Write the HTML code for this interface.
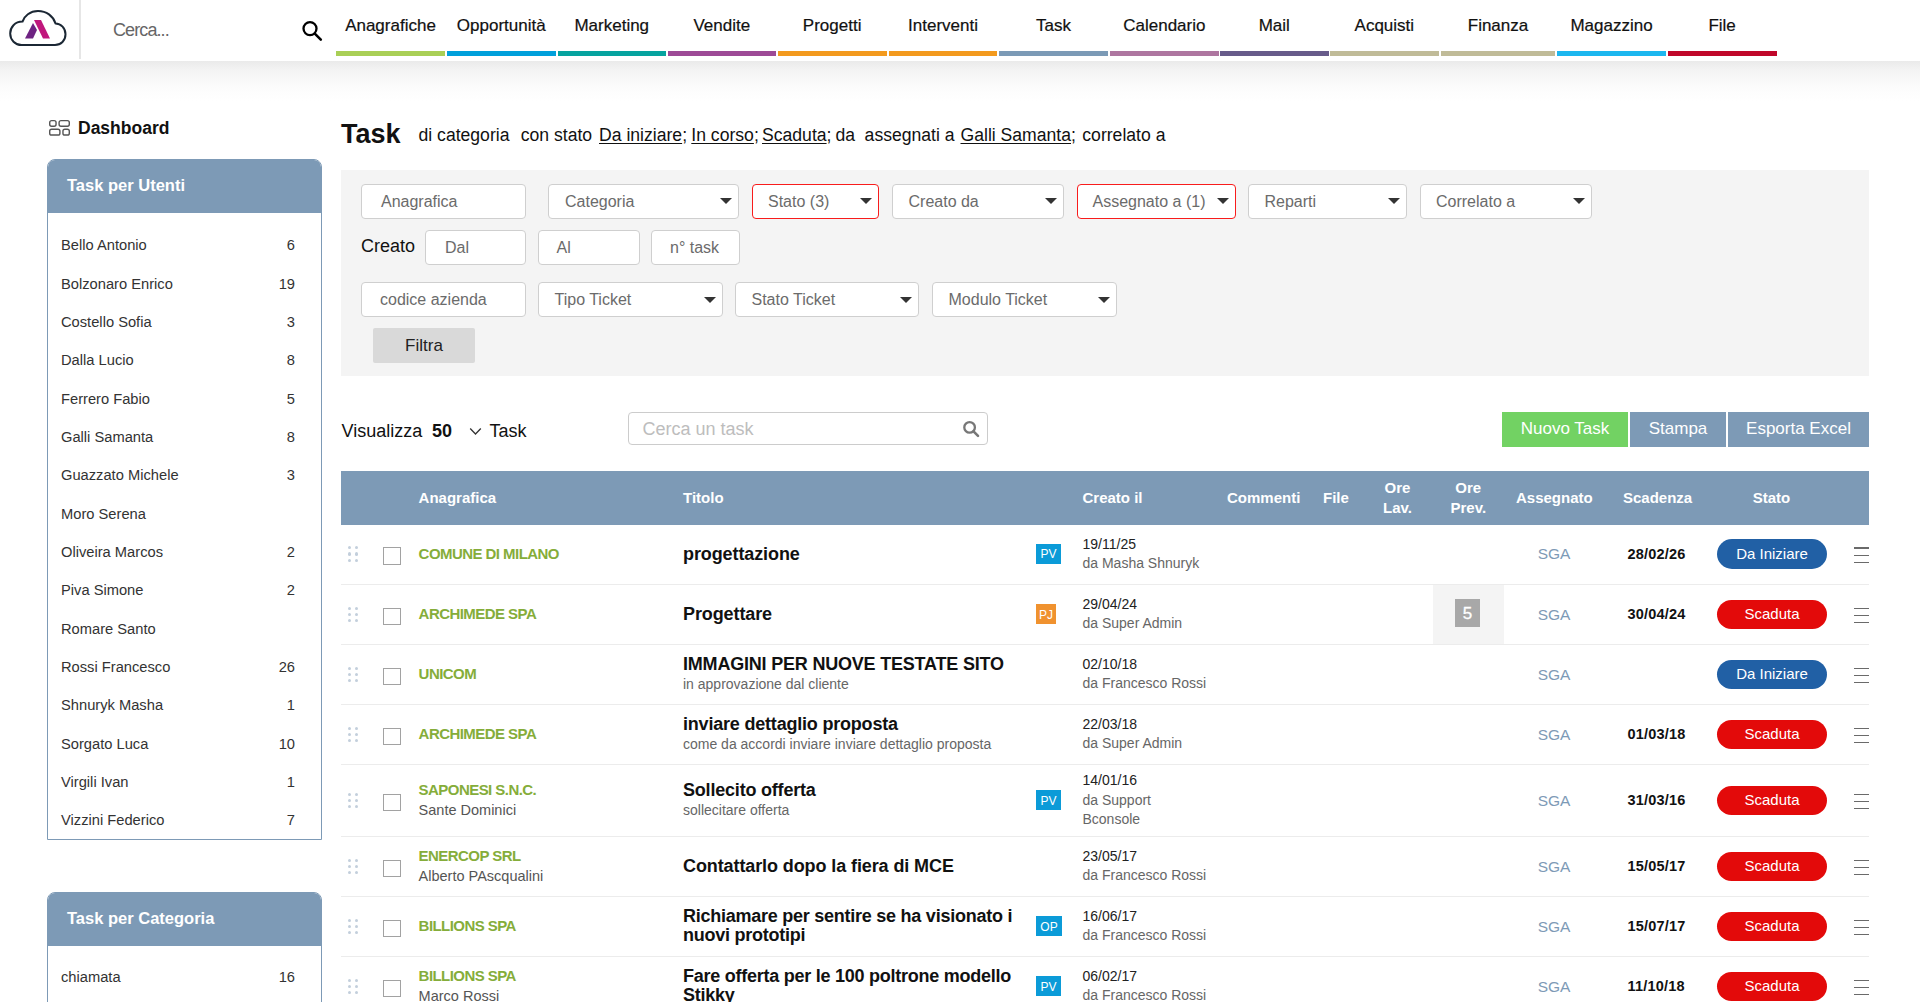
<!DOCTYPE html>
<html><head><meta charset="utf-8">
<style>
*{box-sizing:border-box;margin:0;padding:0}
html,body{width:1920px;height:1002px;overflow:hidden;background:#fff;font-family:"Liberation Sans",sans-serif;color:#222}
.a{position:absolute;white-space:nowrap}
#hdr{position:absolute;left:0;top:0;width:1920px;height:61px;background:#fff;z-index:2}
#shadow{position:absolute;left:0;top:61px;width:1920px;height:40px;background:linear-gradient(#eaeaea,#f3f3f3 22%,#f9f9f9 50%,#fdfdfd 75%,#fff);z-index:1}
.nav{position:absolute;top:0;height:61px}
.nav span{position:absolute;left:-20px;right:-20px;top:16px;text-align:center;font-size:17px;line-height:20px;color:#111;-webkit-text-stroke:0.2px #111}
.nav i{position:absolute;left:0;right:0;top:51px;height:4.6px}
</style></head><body>
<div id="hdr">
<svg class="a" style="left:0;top:0" width="80" height="61" viewBox="0 0 80 61">
<path d="M21.5,45 H55 C61,45 65.5,40.5 65.5,34.3 C65.5,28.3 61,23.6 55.5,23.4 C53,16 46.5,11 38,11 C30,11 24.2,16 22.5,21.6 C14.8,21.6 10.2,27.3 10.2,33.5 C10.2,40 15.3,45 21.5,45 Z" fill="none" stroke="#1b2734" stroke-width="2"/>
<path d="M34,20 L41,20 L50,38.5 L43,38.5 Z" fill="#c0177c"/>
<path d="M33,23 L37,30 L33,38.5 L25,38.5 Z" fill="#6e2382"/>
</svg>
<div class="a" style="left:79px;top:0;width:2px;height:59px;background:#e6e6e6"></div>
<div class="a" style="left:113px;top:19px;font-size:18px;line-height:22px;color:#666;letter-spacing:-0.9px">Cerca...</div>
<svg class="a" style="left:300px;top:19px" width="24" height="24" viewBox="0 0 24 24"><circle cx="10" cy="9.6" r="6.5" fill="none" stroke="#000" stroke-width="2.3"/><path d="M14.8,14.6 L20.8,20.6" stroke="#000" stroke-width="2.6" stroke-linecap="round"/></svg>
<div class="nav" style="left:336px;width:109.0px"><span>Anagrafiche</span><i style="background:#a9cf56"></i></div>
<div class="nav" style="left:447px;width:108.5px"><span>Opportunità</span><i style="background:#00a0db"></i></div>
<div class="nav" style="left:557.5px;width:108.5px"><span>Marketing</span><i style="background:#06a39f"></i></div>
<div class="nav" style="left:667.6px;width:108.4px"><span>Vendite</span><i style="background:#9d4a96"></i></div>
<div class="nav" style="left:777.7px;width:108.9px"><span>Progetti</span><i style="background:#f39a1e"></i></div>
<div class="nav" style="left:888.6px;width:108.9px"><span>Interventi</span><i style="background:#f39a1e"></i></div>
<div class="nav" style="left:999px;width:109.0px"><span>Task</span><i style="background:#7b9ab6"></i></div>
<div class="nav" style="left:1110px;width:108.7px"><span>Calendario</span><i style="background:#ae76a0"></i></div>
<div class="nav" style="left:1220px;width:108.5px"><span>Mail</span><i style="background:#675b8a"></i></div>
<div class="nav" style="left:1330px;width:108.7px"><span>Acquisti</span><i style="background:#c0bb98"></i></div>
<div class="nav" style="left:1441px;width:114.0px"><span>Finanza</span><i style="background:#c0bb98"></i></div>
<div class="nav" style="left:1557px;width:109.0px"><span>Magazzino</span><i style="background:#1cb7ef"></i></div>
<div class="nav" style="left:1667.7px;width:108.9px"><span>File</span><i style="background:#c0072a"></i></div>
</div>
<div id="shadow"></div>
<svg class="a" style="left:45px;top:115px" width="30" height="25" viewBox="0 0 30 25" fill="none" stroke="#555" stroke-width="1.4"><rect x="4.7" y="5.6" width="6.35" height="5.6" rx="1.9"/><rect x="14.1" y="5.6" width="10.2" height="5.6" rx="1.9"/><rect x="4.7" y="14.2" width="10.2" height="5.85" rx="1.9"/><rect x="17.95" y="14.2" width="6.35" height="5.85" rx="1.9"/></svg>
<div class="a" style="left:78px;top:117px;font-size:17.5px;line-height:22px;font-weight:bold;color:#111">Dashboard</div>
<div class="a" style="left:47px;top:159px;width:275px;height:681px;border:1.5px solid #7d9ab6;border-radius:8px 8px 0 0;overflow:hidden">
<div class="a" style="left:0;top:0;width:100%;height:53px;background:#7d9ab6"></div>
<div class="a" style="left:19px;top:15px;font-size:16.5px;line-height:20px;font-weight:bold;color:#fff">Task per Utenti</div>
<div class="a" style="left:13px;top:77.3px;font-size:14.7px;line-height:16px;color:#333">Bello Antonio</div>
<div class="a" style="right:26px;top:77.3px;font-size:14.7px;line-height:16px;color:#333">6</div>
<div class="a" style="left:13px;top:115.6px;font-size:14.7px;line-height:16px;color:#333">Bolzonaro Enrico</div>
<div class="a" style="right:26px;top:115.6px;font-size:14.7px;line-height:16px;color:#333">19</div>
<div class="a" style="left:13px;top:154.0px;font-size:14.7px;line-height:16px;color:#333">Costello Sofia</div>
<div class="a" style="right:26px;top:154.0px;font-size:14.7px;line-height:16px;color:#333">3</div>
<div class="a" style="left:13px;top:192.3px;font-size:14.7px;line-height:16px;color:#333">Dalla Lucio</div>
<div class="a" style="right:26px;top:192.3px;font-size:14.7px;line-height:16px;color:#333">8</div>
<div class="a" style="left:13px;top:230.6px;font-size:14.7px;line-height:16px;color:#333">Ferrero Fabio</div>
<div class="a" style="right:26px;top:230.6px;font-size:14.7px;line-height:16px;color:#333">5</div>
<div class="a" style="left:13px;top:268.9px;font-size:14.7px;line-height:16px;color:#333">Galli Samanta</div>
<div class="a" style="right:26px;top:268.9px;font-size:14.7px;line-height:16px;color:#333">8</div>
<div class="a" style="left:13px;top:307.3px;font-size:14.7px;line-height:16px;color:#333">Guazzato Michele</div>
<div class="a" style="right:26px;top:307.3px;font-size:14.7px;line-height:16px;color:#333">3</div>
<div class="a" style="left:13px;top:345.6px;font-size:14.7px;line-height:16px;color:#333">Moro Serena</div>
<div class="a" style="right:26px;top:345.6px;font-size:14.7px;line-height:16px;color:#333"></div>
<div class="a" style="left:13px;top:383.9px;font-size:14.7px;line-height:16px;color:#333">Oliveira Marcos</div>
<div class="a" style="right:26px;top:383.9px;font-size:14.7px;line-height:16px;color:#333">2</div>
<div class="a" style="left:13px;top:422.3px;font-size:14.7px;line-height:16px;color:#333">Piva Simone</div>
<div class="a" style="right:26px;top:422.3px;font-size:14.7px;line-height:16px;color:#333">2</div>
<div class="a" style="left:13px;top:460.6px;font-size:14.7px;line-height:16px;color:#333">Romare Santo</div>
<div class="a" style="right:26px;top:460.6px;font-size:14.7px;line-height:16px;color:#333"></div>
<div class="a" style="left:13px;top:498.9px;font-size:14.7px;line-height:16px;color:#333">Rossi Francesco</div>
<div class="a" style="right:26px;top:498.9px;font-size:14.7px;line-height:16px;color:#333">26</div>
<div class="a" style="left:13px;top:537.3px;font-size:14.7px;line-height:16px;color:#333">Shnuryk Masha</div>
<div class="a" style="right:26px;top:537.3px;font-size:14.7px;line-height:16px;color:#333">1</div>
<div class="a" style="left:13px;top:575.6px;font-size:14.7px;line-height:16px;color:#333">Sorgato Luca</div>
<div class="a" style="right:26px;top:575.6px;font-size:14.7px;line-height:16px;color:#333">10</div>
<div class="a" style="left:13px;top:613.9px;font-size:14.7px;line-height:16px;color:#333">Virgili Ivan</div>
<div class="a" style="right:26px;top:613.9px;font-size:14.7px;line-height:16px;color:#333">1</div>
<div class="a" style="left:13px;top:652.2px;font-size:14.7px;line-height:16px;color:#333">Vizzini Federico</div>
<div class="a" style="right:26px;top:652.2px;font-size:14.7px;line-height:16px;color:#333">7</div>
</div>
<div class="a" style="left:47px;top:891.5px;width:275px;height:118.5px;border:1.5px solid #7d9ab6;border-radius:8px 8px 0 0;overflow:hidden">
<div class="a" style="left:0;top:0;width:100%;height:53px;background:#7d9ab6"></div>
<div class="a" style="left:19px;top:15px;font-size:16.5px;line-height:20px;font-weight:bold;color:#fff">Task per Categoria</div>
<div class="a" style="left:13px;top:76.7px;font-size:14.7px;line-height:16px;color:#333">chiamata</div>
<div class="a" style="right:26px;top:76.7px;font-size:14.7px;line-height:16px;color:#333">16</div>
</div>
<div class="a" style="left:341px;top:120.54px;font-size:27px;line-height:27px;font-weight:bold;color:#111">Task</div>
<div class="a" style="left:418.5px;top:127.20px;font-size:17.6px;line-height:17.6px;color:#111;text-underline-offset:1.5px">di categoria</div>
<div class="a" style="left:520.7px;top:127.20px;font-size:17.6px;line-height:17.6px;color:#111;text-underline-offset:1.5px">con stato</div>
<div class="a" style="left:599px;top:127.20px;font-size:17.6px;line-height:17.6px;color:#111;text-underline-offset:1.5px"><u>Da iniziare</u>;</div>
<div class="a" style="left:691.3px;top:127.20px;font-size:17.6px;line-height:17.6px;color:#111;text-underline-offset:1.5px"><u>In corso</u>;</div>
<div class="a" style="left:762px;top:127.20px;font-size:17.6px;line-height:17.6px;color:#111;text-underline-offset:1.5px"><u>Scaduta</u>;</div>
<div class="a" style="left:835.5px;top:127.20px;font-size:17.6px;line-height:17.6px;color:#111;text-underline-offset:1.5px">da</div>
<div class="a" style="left:864.6px;top:127.20px;font-size:17.6px;line-height:17.6px;color:#111;text-underline-offset:1.5px">assegnati a</div>
<div class="a" style="left:960.5px;top:127.20px;font-size:17.6px;line-height:17.6px;color:#111;text-underline-offset:1.5px"><u>Galli Samanta</u>;</div>
<div class="a" style="left:1082.3px;top:127.20px;font-size:17.6px;line-height:17.6px;color:#111;text-underline-offset:1.5px">correlato a</div>
<div class="a" style="left:341px;top:170px;width:1527.50px;height:205.50px;background:#f4f4f4"></div>
<div class="a" style="left:361px;top:183.5px;width:165.00px;height:35.00px;background:#fff;border:1px solid #cfcfcf;border-radius:4px"></div>
<div class="a" style="left:381px;top:193.76px;font-size:16px;line-height:16px;color:#6b6b6b">Anagrafica</div>
<div class="a" style="left:548px;top:183.5px;width:191.00px;height:35.00px;background:#fff;border:1px solid #cfcfcf;border-radius:4px"></div>
<div class="a" style="left:565px;top:193.76px;font-size:16px;line-height:16px;color:#6b6b6b">Categoria</div>
<div class="a" style="left:720.4px;top:198.0px;width:0;height:0;border-left:6.2px solid transparent;border-right:6.2px solid transparent;border-top:6px solid #333"></div>
<div class="a" style="left:752px;top:183.5px;width:127.00px;height:35.00px;background:#fff;border:1.8px solid #f81c1c;border-radius:4px"></div>
<div class="a" style="left:768px;top:193.76px;font-size:16px;line-height:16px;color:#6b6b6b">Stato (3)</div>
<div class="a" style="left:860.4px;top:198.0px;width:0;height:0;border-left:6.2px solid transparent;border-right:6.2px solid transparent;border-top:6px solid #333"></div>
<div class="a" style="left:892px;top:183.5px;width:172.00px;height:35.00px;background:#fff;border:1px solid #cfcfcf;border-radius:4px"></div>
<div class="a" style="left:908.5px;top:193.76px;font-size:16px;line-height:16px;color:#6b6b6b">Creato da</div>
<div class="a" style="left:1045.4px;top:198.0px;width:0;height:0;border-left:6.2px solid transparent;border-right:6.2px solid transparent;border-top:6px solid #333"></div>
<div class="a" style="left:1077px;top:183.5px;width:159.00px;height:35.00px;background:#fff;border:1.8px solid #f81c1c;border-radius:4px"></div>
<div class="a" style="left:1092.5px;top:193.76px;font-size:16px;line-height:16px;color:#6b6b6b">Assegnato a (1)</div>
<div class="a" style="left:1217.4px;top:198.0px;width:0;height:0;border-left:6.2px solid transparent;border-right:6.2px solid transparent;border-top:6px solid #333"></div>
<div class="a" style="left:1248px;top:183.5px;width:159.00px;height:35.00px;background:#fff;border:1px solid #cfcfcf;border-radius:4px"></div>
<div class="a" style="left:1264.5px;top:193.76px;font-size:16px;line-height:16px;color:#6b6b6b">Reparti</div>
<div class="a" style="left:1388.4px;top:198.0px;width:0;height:0;border-left:6.2px solid transparent;border-right:6.2px solid transparent;border-top:6px solid #333"></div>
<div class="a" style="left:1420px;top:183.5px;width:172.00px;height:35.00px;background:#fff;border:1px solid #cfcfcf;border-radius:4px"></div>
<div class="a" style="left:1436px;top:193.76px;font-size:16px;line-height:16px;color:#6b6b6b">Correlato a</div>
<div class="a" style="left:1573.4px;top:198.0px;width:0;height:0;border-left:6.2px solid transparent;border-right:6.2px solid transparent;border-top:6px solid #333"></div>
<div class="a" style="left:361px;top:237.36px;font-size:18px;line-height:18px;color:#111">Creato</div>
<div class="a" style="left:425px;top:229.5px;width:101.00px;height:35.00px;background:#fff;border:1px solid #cfcfcf;border-radius:4px"></div>
<div class="a" style="left:445px;top:239.76px;font-size:16px;line-height:16px;color:#6b6b6b">Dal</div>
<div class="a" style="left:538px;top:229.5px;width:101.50px;height:35.00px;background:#fff;border:1px solid #cfcfcf;border-radius:4px"></div>
<div class="a" style="left:556.5px;top:239.76px;font-size:16px;line-height:16px;color:#6b6b6b">Al</div>
<div class="a" style="left:651px;top:229.5px;width:88.50px;height:35.00px;background:#fff;border:1px solid #cfcfcf;border-radius:4px"></div>
<div class="a" style="left:670px;top:239.76px;font-size:16px;line-height:16px;color:#6b6b6b">n° task</div>
<div class="a" style="left:361px;top:282px;width:165.00px;height:35.00px;background:#fff;border:1px solid #cfcfcf;border-radius:4px"></div>
<div class="a" style="left:380px;top:292.26px;font-size:16px;line-height:16px;color:#6b6b6b">codice azienda</div>
<div class="a" style="left:538px;top:282px;width:184.50px;height:35.00px;background:#fff;border:1px solid #cfcfcf;border-radius:4px"></div>
<div class="a" style="left:554.5px;top:292.26px;font-size:16px;line-height:16px;color:#6b6b6b">Tipo Ticket</div>
<div class="a" style="left:703.9px;top:296.5px;width:0;height:0;border-left:6.2px solid transparent;border-right:6.2px solid transparent;border-top:6px solid #333"></div>
<div class="a" style="left:734.5px;top:282px;width:184.50px;height:35.00px;background:#fff;border:1px solid #cfcfcf;border-radius:4px"></div>
<div class="a" style="left:751.5px;top:292.26px;font-size:16px;line-height:16px;color:#6b6b6b">Stato Ticket</div>
<div class="a" style="left:900.4px;top:296.5px;width:0;height:0;border-left:6.2px solid transparent;border-right:6.2px solid transparent;border-top:6px solid #333"></div>
<div class="a" style="left:932px;top:282px;width:184.50px;height:35.00px;background:#fff;border:1px solid #cfcfcf;border-radius:4px"></div>
<div class="a" style="left:948.5px;top:292.26px;font-size:16px;line-height:16px;color:#6b6b6b">Modulo Ticket</div>
<div class="a" style="left:1097.9px;top:296.5px;width:0;height:0;border-left:6.2px solid transparent;border-right:6.2px solid transparent;border-top:6px solid #333"></div>
<div class="a" style="left:373px;top:327.5px;width:102.00px;height:35.30px;background:#d9d9d9;border-radius:2px"></div>
<div class="a" style="left:374.00px;width:100px;text-align:center;top:337.11px;font-size:17px;line-height:17px;color:#222">Filtra</div>
<div class="a" style="left:341.5px;top:422.16px;font-size:18px;line-height:18px;color:#111">Visualizza</div>
<div class="a" style="left:432px;top:421.96px;font-size:18px;line-height:18px;font-weight:bold;color:#111">50</div>
<svg class="a" style="left:469px;top:427px" width="13" height="9" viewBox="0 0 13 9"><path d="M1.2,1.5 L6.5,7 L11.8,1.5" fill="none" stroke="#333" stroke-width="1.3"/></svg>
<div class="a" style="left:489.5px;top:421.96px;font-size:18px;line-height:18px;color:#111">Task</div>
<div class="a" style="left:628px;top:412px;width:359.60px;height:33.40px;background:#fff;border:1.3px solid #cccccc;border-radius:4px"></div>
<div class="a" style="left:642.5px;top:419.76px;font-size:18px;line-height:18px;color:#bdbdbd">Cerca un task</div>
<svg class="a" style="left:960px;top:418px" width="22" height="22" viewBox="0 0 22 22"><circle cx="9.6" cy="9.4" r="5.3" fill="none" stroke="#777" stroke-width="2.3"/><path d="M13.5,13.3 L18,17.8" stroke="#777" stroke-width="2.6" stroke-linecap="round"/></svg>
<div class="a" style="left:1502px;top:411.5px;width:126.00px;height:35.00px;background:#72d263"></div>
<div class="a" style="left:1502.00px;width:126px;text-align:center;top:420.11px;font-size:17px;line-height:17px;color:#fff">Nuovo Task</div>
<div class="a" style="left:1630px;top:411.5px;width:96.30px;height:35.00px;background:#7d9ab6"></div>
<div class="a" style="left:1630.00px;width:96px;text-align:center;top:420.11px;font-size:17px;line-height:17px;color:#fff">Stampa</div>
<div class="a" style="left:1728px;top:411.5px;width:141.00px;height:35.00px;background:#7d9ab6"></div>
<div class="a" style="left:1728.00px;width:141px;text-align:center;top:420.11px;font-size:17px;line-height:17px;color:#fff">Esporta Excel</div>
<div class="a" style="left:341px;top:471px;width:1528.00px;height:53.50px;background:#7d9ab6"></div>
<div class="a" style="left:418.6px;top:489.70px;font-size:15px;line-height:15px;font-weight:bold;color:#fff">Anagrafica</div>
<div class="a" style="left:683px;top:489.70px;font-size:15px;line-height:15px;font-weight:bold;color:#fff">Titolo</div>
<div class="a" style="left:1082.5px;top:489.70px;font-size:15px;line-height:15px;font-weight:bold;color:#fff">Creato il</div>
<div class="a" style="left:1227px;top:489.70px;font-size:15px;line-height:15px;font-weight:bold;color:#fff">Commenti</div>
<div class="a" style="left:1323px;top:489.70px;font-size:15px;line-height:15px;font-weight:bold;color:#fff">File</div>
<div class="a" style="left:1357.50px;width:80px;text-align:center;top:479.70px;font-size:15px;line-height:15px;font-weight:bold;color:#fff">Ore</div>
<div class="a" style="left:1357.50px;width:80px;text-align:center;top:499.70px;font-size:15px;line-height:15px;font-weight:bold;color:#fff">Lav.</div>
<div class="a" style="left:1428.30px;width:80px;text-align:center;top:479.70px;font-size:15px;line-height:15px;font-weight:bold;color:#fff">Ore</div>
<div class="a" style="left:1428.30px;width:80px;text-align:center;top:499.70px;font-size:15px;line-height:15px;font-weight:bold;color:#fff">Prev.</div>
<div class="a" style="left:1516px;top:489.70px;font-size:15px;line-height:15px;font-weight:bold;color:#fff">Assegnato</div>
<div class="a" style="left:1623px;top:489.70px;font-size:15px;line-height:15px;font-weight:bold;color:#fff">Scadenza</div>
<div class="a" style="left:1721.50px;width:100px;text-align:center;top:489.70px;font-size:15px;line-height:15px;font-weight:bold;color:#fff">Stato</div>
<div class="a" style="left:348.3px;top:546.2px;width:10px;height:16px"><i style="position:absolute;left:0px;top:0px;width:3.2px;height:3.2px;border-radius:50%;background:#c3cfdc"></i><i style="position:absolute;left:0px;top:6.3px;width:3.2px;height:3.2px;border-radius:50%;background:#c3cfdc"></i><i style="position:absolute;left:0px;top:12.6px;width:3.2px;height:3.2px;border-radius:50%;background:#c3cfdc"></i><i style="position:absolute;left:6.3px;top:0px;width:3.2px;height:3.2px;border-radius:50%;background:#c3cfdc"></i><i style="position:absolute;left:6.3px;top:6.3px;width:3.2px;height:3.2px;border-radius:50%;background:#c3cfdc"></i><i style="position:absolute;left:6.3px;top:12.6px;width:3.2px;height:3.2px;border-radius:50%;background:#c3cfdc"></i></div>
<div class="a" style="left:383px;top:547.4px;width:17.80px;height:17.60px;border:1.6px solid #a2a2a2;background:#fff"></div>
<div class="a" style="left:418.6px;top:545.90px;font-size:15px;line-height:15px;font-weight:bold;color:#85ad3a;letter-spacing:-0.55px">COMUNE DI MILANO</div>
<div class="a" style="left:683px;top:544.96px;font-size:18px;line-height:18px;font-weight:bold;color:#111;letter-spacing:-0.1px">progettazione</div>
<div class="a" style="left:1036px;top:543.7px;width:25.00px;height:20.30px;background:#0b9bd8"></div>
<div class="a" style="left:1036.00px;width:25px;text-align:center;top:548.14px;font-size:12px;line-height:12px;color:#fff">PV</div>
<div class="a" style="left:1082.5px;top:536.95px;font-size:14px;line-height:14px;color:#222">19/11/25</div>
<div class="a" style="left:1082.5px;top:555.75px;font-size:14px;line-height:14px;color:#666">da Masha Shnuryk</div>
<div class="a" style="left:1514.00px;width:80px;text-align:center;top:546.48px;font-size:15.5px;line-height:15.5px;color:#7d9ab6">SGA</div>
<div class="a" style="left:1627.5px;top:546.53px;font-size:14.5px;line-height:14.5px;font-weight:bold;color:#111;letter-spacing:0.2px">28/02/26</div>
<div class="a" style="left:1717px;top:539.2px;width:110.20px;height:29.50px;background:#2160a5;border-radius:15px"></div>
<div class="a" style="left:1717.00px;width:110px;text-align:center;top:545.90px;font-size:15px;line-height:15px;color:#fff">Da Iniziare</div>
<div class="a" style="left:1853.5px;top:547.4px;width:15.50px;height:1.30px;background:#6a6a6a"></div>
<div class="a" style="left:1853.5px;top:554.6px;width:15.50px;height:1.30px;background:#6a6a6a"></div>
<div class="a" style="left:1853.5px;top:561.6999999999999px;width:15.50px;height:1.30px;background:#6a6a6a"></div>
<div class="a" style="left:341px;top:584px;width:1528.00px;height:1.00px;background:#ececec"></div>
<div class="a" style="left:1433px;top:584.5px;width:71.00px;height:60.00px;background:#f4f4f4"></div>
<div class="a" style="left:1455px;top:599.3px;width:25.00px;height:28.20px;background:#a8a8a8"></div>
<div class="a" style="left:1455.00px;width:25px;text-align:center;top:605.41px;font-size:17px;line-height:17px;color:#fff;-webkit-text-stroke:0.3px #fff">5</div>
<div class="a" style="left:348.3px;top:606.7px;width:10px;height:16px"><i style="position:absolute;left:0px;top:0px;width:3.2px;height:3.2px;border-radius:50%;background:#c3cfdc"></i><i style="position:absolute;left:0px;top:6.3px;width:3.2px;height:3.2px;border-radius:50%;background:#c3cfdc"></i><i style="position:absolute;left:0px;top:12.6px;width:3.2px;height:3.2px;border-radius:50%;background:#c3cfdc"></i><i style="position:absolute;left:6.3px;top:0px;width:3.2px;height:3.2px;border-radius:50%;background:#c3cfdc"></i><i style="position:absolute;left:6.3px;top:6.3px;width:3.2px;height:3.2px;border-radius:50%;background:#c3cfdc"></i><i style="position:absolute;left:6.3px;top:12.6px;width:3.2px;height:3.2px;border-radius:50%;background:#c3cfdc"></i></div>
<div class="a" style="left:383px;top:607.9px;width:17.80px;height:17.60px;border:1.6px solid #a2a2a2;background:#fff"></div>
<div class="a" style="left:418.6px;top:606.40px;font-size:15px;line-height:15px;font-weight:bold;color:#85ad3a;letter-spacing:-0.55px">ARCHIMEDE SPA</div>
<div class="a" style="left:683px;top:605.46px;font-size:18px;line-height:18px;font-weight:bold;color:#111;letter-spacing:-0.1px">Progettare</div>
<div class="a" style="left:1036px;top:604.2px;width:20.00px;height:20.30px;background:#f0922f"></div>
<div class="a" style="left:1036.00px;width:20px;text-align:center;top:608.64px;font-size:12px;line-height:12px;color:#fff">PJ</div>
<div class="a" style="left:1082.5px;top:597.45px;font-size:14px;line-height:14px;color:#222">29/04/24</div>
<div class="a" style="left:1082.5px;top:616.25px;font-size:14px;line-height:14px;color:#666">da Super Admin</div>
<div class="a" style="left:1514.00px;width:80px;text-align:center;top:606.98px;font-size:15.5px;line-height:15.5px;color:#7d9ab6">SGA</div>
<div class="a" style="left:1627.5px;top:607.03px;font-size:14.5px;line-height:14.5px;font-weight:bold;color:#111;letter-spacing:0.2px">30/04/24</div>
<div class="a" style="left:1717px;top:599.7px;width:110.20px;height:29.50px;background:#e30a0a;border-radius:15px"></div>
<div class="a" style="left:1717.00px;width:110px;text-align:center;top:606.40px;font-size:15px;line-height:15px;color:#fff">Scaduta</div>
<div class="a" style="left:1853.5px;top:607.9px;width:15.50px;height:1.30px;background:#6a6a6a"></div>
<div class="a" style="left:1853.5px;top:615.1px;width:15.50px;height:1.30px;background:#6a6a6a"></div>
<div class="a" style="left:1853.5px;top:622.1999999999999px;width:15.50px;height:1.30px;background:#6a6a6a"></div>
<div class="a" style="left:341px;top:644px;width:1528.00px;height:1.00px;background:#ececec"></div>
<div class="a" style="left:348.3px;top:666.7px;width:10px;height:16px"><i style="position:absolute;left:0px;top:0px;width:3.2px;height:3.2px;border-radius:50%;background:#c3cfdc"></i><i style="position:absolute;left:0px;top:6.3px;width:3.2px;height:3.2px;border-radius:50%;background:#c3cfdc"></i><i style="position:absolute;left:0px;top:12.6px;width:3.2px;height:3.2px;border-radius:50%;background:#c3cfdc"></i><i style="position:absolute;left:6.3px;top:0px;width:3.2px;height:3.2px;border-radius:50%;background:#c3cfdc"></i><i style="position:absolute;left:6.3px;top:6.3px;width:3.2px;height:3.2px;border-radius:50%;background:#c3cfdc"></i><i style="position:absolute;left:6.3px;top:12.6px;width:3.2px;height:3.2px;border-radius:50%;background:#c3cfdc"></i></div>
<div class="a" style="left:383px;top:667.9px;width:17.80px;height:17.60px;border:1.6px solid #a2a2a2;background:#fff"></div>
<div class="a" style="left:418.6px;top:666.40px;font-size:15px;line-height:15px;font-weight:bold;color:#85ad3a;letter-spacing:-0.55px">UNICOM</div>
<div class="a" style="left:683px;top:655.26px;font-size:18px;line-height:18px;font-weight:bold;color:#111;letter-spacing:-0.2px">IMMAGINI PER NUOVE TESTATE SITO</div>
<div class="a" style="left:683px;top:677.45px;font-size:14px;line-height:14px;color:#666">in approvazione dal cliente</div>
<div class="a" style="left:1082.5px;top:657.45px;font-size:14px;line-height:14px;color:#222">02/10/18</div>
<div class="a" style="left:1082.5px;top:676.25px;font-size:14px;line-height:14px;color:#666">da Francesco Rossi</div>
<div class="a" style="left:1514.00px;width:80px;text-align:center;top:666.98px;font-size:15.5px;line-height:15.5px;color:#7d9ab6">SGA</div>
<div class="a" style="left:1717px;top:659.7px;width:110.20px;height:29.50px;background:#2160a5;border-radius:15px"></div>
<div class="a" style="left:1717.00px;width:110px;text-align:center;top:666.40px;font-size:15px;line-height:15px;color:#fff">Da Iniziare</div>
<div class="a" style="left:1853.5px;top:667.9px;width:15.50px;height:1.30px;background:#6a6a6a"></div>
<div class="a" style="left:1853.5px;top:675.1px;width:15.50px;height:1.30px;background:#6a6a6a"></div>
<div class="a" style="left:1853.5px;top:682.1999999999999px;width:15.50px;height:1.30px;background:#6a6a6a"></div>
<div class="a" style="left:341px;top:704px;width:1528.00px;height:1.00px;background:#ececec"></div>
<div class="a" style="left:348.3px;top:726.7px;width:10px;height:16px"><i style="position:absolute;left:0px;top:0px;width:3.2px;height:3.2px;border-radius:50%;background:#c3cfdc"></i><i style="position:absolute;left:0px;top:6.3px;width:3.2px;height:3.2px;border-radius:50%;background:#c3cfdc"></i><i style="position:absolute;left:0px;top:12.6px;width:3.2px;height:3.2px;border-radius:50%;background:#c3cfdc"></i><i style="position:absolute;left:6.3px;top:0px;width:3.2px;height:3.2px;border-radius:50%;background:#c3cfdc"></i><i style="position:absolute;left:6.3px;top:6.3px;width:3.2px;height:3.2px;border-radius:50%;background:#c3cfdc"></i><i style="position:absolute;left:6.3px;top:12.6px;width:3.2px;height:3.2px;border-radius:50%;background:#c3cfdc"></i></div>
<div class="a" style="left:383px;top:727.9px;width:17.80px;height:17.60px;border:1.6px solid #a2a2a2;background:#fff"></div>
<div class="a" style="left:418.6px;top:726.40px;font-size:15px;line-height:15px;font-weight:bold;color:#85ad3a;letter-spacing:-0.55px">ARCHIMEDE SPA</div>
<div class="a" style="left:683px;top:715.26px;font-size:18px;line-height:18px;font-weight:bold;color:#111;letter-spacing:-0.2px">inviare dettaglio proposta</div>
<div class="a" style="left:683px;top:737.45px;font-size:14px;line-height:14px;color:#666">come da accordi inviare inviare dettaglio proposta</div>
<div class="a" style="left:1082.5px;top:717.45px;font-size:14px;line-height:14px;color:#222">22/03/18</div>
<div class="a" style="left:1082.5px;top:736.25px;font-size:14px;line-height:14px;color:#666">da Super Admin</div>
<div class="a" style="left:1514.00px;width:80px;text-align:center;top:726.98px;font-size:15.5px;line-height:15.5px;color:#7d9ab6">SGA</div>
<div class="a" style="left:1627.5px;top:727.03px;font-size:14.5px;line-height:14.5px;font-weight:bold;color:#111;letter-spacing:0.2px">01/03/18</div>
<div class="a" style="left:1717px;top:719.7px;width:110.20px;height:29.50px;background:#e30a0a;border-radius:15px"></div>
<div class="a" style="left:1717.00px;width:110px;text-align:center;top:726.40px;font-size:15px;line-height:15px;color:#fff">Scaduta</div>
<div class="a" style="left:1853.5px;top:727.9px;width:15.50px;height:1.30px;background:#6a6a6a"></div>
<div class="a" style="left:1853.5px;top:735.1px;width:15.50px;height:1.30px;background:#6a6a6a"></div>
<div class="a" style="left:1853.5px;top:742.1999999999999px;width:15.50px;height:1.30px;background:#6a6a6a"></div>
<div class="a" style="left:341px;top:764px;width:1528.00px;height:1.00px;background:#ececec"></div>
<div class="a" style="left:348.3px;top:792.7px;width:10px;height:16px"><i style="position:absolute;left:0px;top:0px;width:3.2px;height:3.2px;border-radius:50%;background:#c3cfdc"></i><i style="position:absolute;left:0px;top:6.3px;width:3.2px;height:3.2px;border-radius:50%;background:#c3cfdc"></i><i style="position:absolute;left:0px;top:12.6px;width:3.2px;height:3.2px;border-radius:50%;background:#c3cfdc"></i><i style="position:absolute;left:6.3px;top:0px;width:3.2px;height:3.2px;border-radius:50%;background:#c3cfdc"></i><i style="position:absolute;left:6.3px;top:6.3px;width:3.2px;height:3.2px;border-radius:50%;background:#c3cfdc"></i><i style="position:absolute;left:6.3px;top:12.6px;width:3.2px;height:3.2px;border-radius:50%;background:#c3cfdc"></i></div>
<div class="a" style="left:383px;top:793.9px;width:17.80px;height:17.60px;border:1.6px solid #a2a2a2;background:#fff"></div>
<div class="a" style="left:418.6px;top:781.60px;font-size:15px;line-height:15px;font-weight:bold;color:#85ad3a;letter-spacing:-0.55px">SAPONESI S.N.C.</div>
<div class="a" style="left:418.6px;top:802.53px;font-size:14.5px;line-height:14.5px;color:#555">Sante Dominici</div>
<div class="a" style="left:683px;top:781.26px;font-size:18px;line-height:18px;font-weight:bold;color:#111;letter-spacing:-0.2px">Sollecito offerta</div>
<div class="a" style="left:683px;top:803.45px;font-size:14px;line-height:14px;color:#666">sollecitare offerta</div>
<div class="a" style="left:1036px;top:790.2px;width:25.00px;height:20.30px;background:#0b9bd8"></div>
<div class="a" style="left:1036.00px;width:25px;text-align:center;top:794.64px;font-size:12px;line-height:12px;color:#fff">PV</div>
<div class="a" style="left:1082.5px;top:773.45px;font-size:14px;line-height:14px;color:#222">14/01/16</div>
<div class="a" style="left:1082.5px;top:793.25px;font-size:14px;line-height:14px;color:#666">da Support</div>
<div class="a" style="left:1082.5px;top:812.15px;font-size:14px;line-height:14px;color:#666">Bconsole</div>
<div class="a" style="left:1514.00px;width:80px;text-align:center;top:792.98px;font-size:15.5px;line-height:15.5px;color:#7d9ab6">SGA</div>
<div class="a" style="left:1627.5px;top:793.03px;font-size:14.5px;line-height:14.5px;font-weight:bold;color:#111;letter-spacing:0.2px">31/03/16</div>
<div class="a" style="left:1717px;top:785.7px;width:110.20px;height:29.50px;background:#e30a0a;border-radius:15px"></div>
<div class="a" style="left:1717.00px;width:110px;text-align:center;top:792.40px;font-size:15px;line-height:15px;color:#fff">Scaduta</div>
<div class="a" style="left:1853.5px;top:793.9px;width:15.50px;height:1.30px;background:#6a6a6a"></div>
<div class="a" style="left:1853.5px;top:801.1px;width:15.50px;height:1.30px;background:#6a6a6a"></div>
<div class="a" style="left:1853.5px;top:808.1999999999999px;width:15.50px;height:1.30px;background:#6a6a6a"></div>
<div class="a" style="left:341px;top:836px;width:1528.00px;height:1.00px;background:#ececec"></div>
<div class="a" style="left:348.3px;top:858.7px;width:10px;height:16px"><i style="position:absolute;left:0px;top:0px;width:3.2px;height:3.2px;border-radius:50%;background:#c3cfdc"></i><i style="position:absolute;left:0px;top:6.3px;width:3.2px;height:3.2px;border-radius:50%;background:#c3cfdc"></i><i style="position:absolute;left:0px;top:12.6px;width:3.2px;height:3.2px;border-radius:50%;background:#c3cfdc"></i><i style="position:absolute;left:6.3px;top:0px;width:3.2px;height:3.2px;border-radius:50%;background:#c3cfdc"></i><i style="position:absolute;left:6.3px;top:6.3px;width:3.2px;height:3.2px;border-radius:50%;background:#c3cfdc"></i><i style="position:absolute;left:6.3px;top:12.6px;width:3.2px;height:3.2px;border-radius:50%;background:#c3cfdc"></i></div>
<div class="a" style="left:383px;top:859.9px;width:17.80px;height:17.60px;border:1.6px solid #a2a2a2;background:#fff"></div>
<div class="a" style="left:418.6px;top:847.60px;font-size:15px;line-height:15px;font-weight:bold;color:#85ad3a;letter-spacing:-0.55px">ENERCOP SRL</div>
<div class="a" style="left:418.6px;top:868.53px;font-size:14.5px;line-height:14.5px;color:#555">Alberto PAscqualini</div>
<div class="a" style="left:683px;top:857.46px;font-size:18px;line-height:18px;font-weight:bold;color:#111;letter-spacing:-0.1px">Contattarlo dopo la fiera di MCE</div>
<div class="a" style="left:1082.5px;top:849.45px;font-size:14px;line-height:14px;color:#222">23/05/17</div>
<div class="a" style="left:1082.5px;top:868.25px;font-size:14px;line-height:14px;color:#666">da Francesco Rossi</div>
<div class="a" style="left:1514.00px;width:80px;text-align:center;top:858.98px;font-size:15.5px;line-height:15.5px;color:#7d9ab6">SGA</div>
<div class="a" style="left:1627.5px;top:859.03px;font-size:14.5px;line-height:14.5px;font-weight:bold;color:#111;letter-spacing:0.2px">15/05/17</div>
<div class="a" style="left:1717px;top:851.7px;width:110.20px;height:29.50px;background:#e30a0a;border-radius:15px"></div>
<div class="a" style="left:1717.00px;width:110px;text-align:center;top:858.40px;font-size:15px;line-height:15px;color:#fff">Scaduta</div>
<div class="a" style="left:1853.5px;top:859.9px;width:15.50px;height:1.30px;background:#6a6a6a"></div>
<div class="a" style="left:1853.5px;top:867.1px;width:15.50px;height:1.30px;background:#6a6a6a"></div>
<div class="a" style="left:1853.5px;top:874.1999999999999px;width:15.50px;height:1.30px;background:#6a6a6a"></div>
<div class="a" style="left:341px;top:896px;width:1528.00px;height:1.00px;background:#ececec"></div>
<div class="a" style="left:348.3px;top:918.7px;width:10px;height:16px"><i style="position:absolute;left:0px;top:0px;width:3.2px;height:3.2px;border-radius:50%;background:#c3cfdc"></i><i style="position:absolute;left:0px;top:6.3px;width:3.2px;height:3.2px;border-radius:50%;background:#c3cfdc"></i><i style="position:absolute;left:0px;top:12.6px;width:3.2px;height:3.2px;border-radius:50%;background:#c3cfdc"></i><i style="position:absolute;left:6.3px;top:0px;width:3.2px;height:3.2px;border-radius:50%;background:#c3cfdc"></i><i style="position:absolute;left:6.3px;top:6.3px;width:3.2px;height:3.2px;border-radius:50%;background:#c3cfdc"></i><i style="position:absolute;left:6.3px;top:12.6px;width:3.2px;height:3.2px;border-radius:50%;background:#c3cfdc"></i></div>
<div class="a" style="left:383px;top:919.9px;width:17.80px;height:17.60px;border:1.6px solid #a2a2a2;background:#fff"></div>
<div class="a" style="left:418.6px;top:918.40px;font-size:15px;line-height:15px;font-weight:bold;color:#85ad3a;letter-spacing:-0.55px">BILLIONS SPA</div>
<div class="a" style="left:683px;top:907.26px;font-size:18px;line-height:18px;font-weight:bold;color:#111;letter-spacing:-0.25px">Richiamare per sentire se ha visionato i</div>
<div class="a" style="left:683px;top:926.46px;font-size:18px;line-height:18px;font-weight:bold;color:#111;letter-spacing:-0.25px">nuovi prototipi</div>
<div class="a" style="left:1036px;top:916.2px;width:26.00px;height:20.30px;background:#0b9bd8"></div>
<div class="a" style="left:1036.00px;width:26px;text-align:center;top:920.64px;font-size:12px;line-height:12px;color:#fff">OP</div>
<div class="a" style="left:1082.5px;top:909.45px;font-size:14px;line-height:14px;color:#222">16/06/17</div>
<div class="a" style="left:1082.5px;top:928.25px;font-size:14px;line-height:14px;color:#666">da Francesco Rossi</div>
<div class="a" style="left:1514.00px;width:80px;text-align:center;top:918.98px;font-size:15.5px;line-height:15.5px;color:#7d9ab6">SGA</div>
<div class="a" style="left:1627.5px;top:919.03px;font-size:14.5px;line-height:14.5px;font-weight:bold;color:#111;letter-spacing:0.2px">15/07/17</div>
<div class="a" style="left:1717px;top:911.7px;width:110.20px;height:29.50px;background:#e30a0a;border-radius:15px"></div>
<div class="a" style="left:1717.00px;width:110px;text-align:center;top:918.40px;font-size:15px;line-height:15px;color:#fff">Scaduta</div>
<div class="a" style="left:1853.5px;top:919.9px;width:15.50px;height:1.30px;background:#6a6a6a"></div>
<div class="a" style="left:1853.5px;top:927.1px;width:15.50px;height:1.30px;background:#6a6a6a"></div>
<div class="a" style="left:1853.5px;top:934.1999999999999px;width:15.50px;height:1.30px;background:#6a6a6a"></div>
<div class="a" style="left:341px;top:956px;width:1528.00px;height:1.00px;background:#ececec"></div>
<div class="a" style="left:348.3px;top:978.7px;width:10px;height:16px"><i style="position:absolute;left:0px;top:0px;width:3.2px;height:3.2px;border-radius:50%;background:#c3cfdc"></i><i style="position:absolute;left:0px;top:6.3px;width:3.2px;height:3.2px;border-radius:50%;background:#c3cfdc"></i><i style="position:absolute;left:0px;top:12.6px;width:3.2px;height:3.2px;border-radius:50%;background:#c3cfdc"></i><i style="position:absolute;left:6.3px;top:0px;width:3.2px;height:3.2px;border-radius:50%;background:#c3cfdc"></i><i style="position:absolute;left:6.3px;top:6.3px;width:3.2px;height:3.2px;border-radius:50%;background:#c3cfdc"></i><i style="position:absolute;left:6.3px;top:12.6px;width:3.2px;height:3.2px;border-radius:50%;background:#c3cfdc"></i></div>
<div class="a" style="left:383px;top:979.9px;width:17.80px;height:17.60px;border:1.6px solid #a2a2a2;background:#fff"></div>
<div class="a" style="left:418.6px;top:967.60px;font-size:15px;line-height:15px;font-weight:bold;color:#85ad3a;letter-spacing:-0.55px">BILLIONS SPA</div>
<div class="a" style="left:418.6px;top:988.53px;font-size:14.5px;line-height:14.5px;color:#555">Marco Rossi</div>
<div class="a" style="left:683px;top:967.26px;font-size:18px;line-height:18px;font-weight:bold;color:#111;letter-spacing:-0.25px">Fare offerta per le 100 poltrone modello</div>
<div class="a" style="left:683px;top:986.46px;font-size:18px;line-height:18px;font-weight:bold;color:#111;letter-spacing:-0.25px">Stikky</div>
<div class="a" style="left:1036px;top:976.2px;width:25.00px;height:20.30px;background:#0b9bd8"></div>
<div class="a" style="left:1036.00px;width:25px;text-align:center;top:980.64px;font-size:12px;line-height:12px;color:#fff">PV</div>
<div class="a" style="left:1082.5px;top:969.45px;font-size:14px;line-height:14px;color:#222">06/02/17</div>
<div class="a" style="left:1082.5px;top:988.25px;font-size:14px;line-height:14px;color:#666">da Francesco Rossi</div>
<div class="a" style="left:1514.00px;width:80px;text-align:center;top:978.98px;font-size:15.5px;line-height:15.5px;color:#7d9ab6">SGA</div>
<div class="a" style="left:1627.5px;top:979.03px;font-size:14.5px;line-height:14.5px;font-weight:bold;color:#111;letter-spacing:0.2px">11/10/18</div>
<div class="a" style="left:1717px;top:971.7px;width:110.20px;height:29.50px;background:#e30a0a;border-radius:15px"></div>
<div class="a" style="left:1717.00px;width:110px;text-align:center;top:978.40px;font-size:15px;line-height:15px;color:#fff">Scaduta</div>
<div class="a" style="left:1853.5px;top:979.9px;width:15.50px;height:1.30px;background:#6a6a6a"></div>
<div class="a" style="left:1853.5px;top:987.1px;width:15.50px;height:1.30px;background:#6a6a6a"></div>
<div class="a" style="left:1853.5px;top:994.1999999999999px;width:15.50px;height:1.30px;background:#6a6a6a"></div>
</body></html>
